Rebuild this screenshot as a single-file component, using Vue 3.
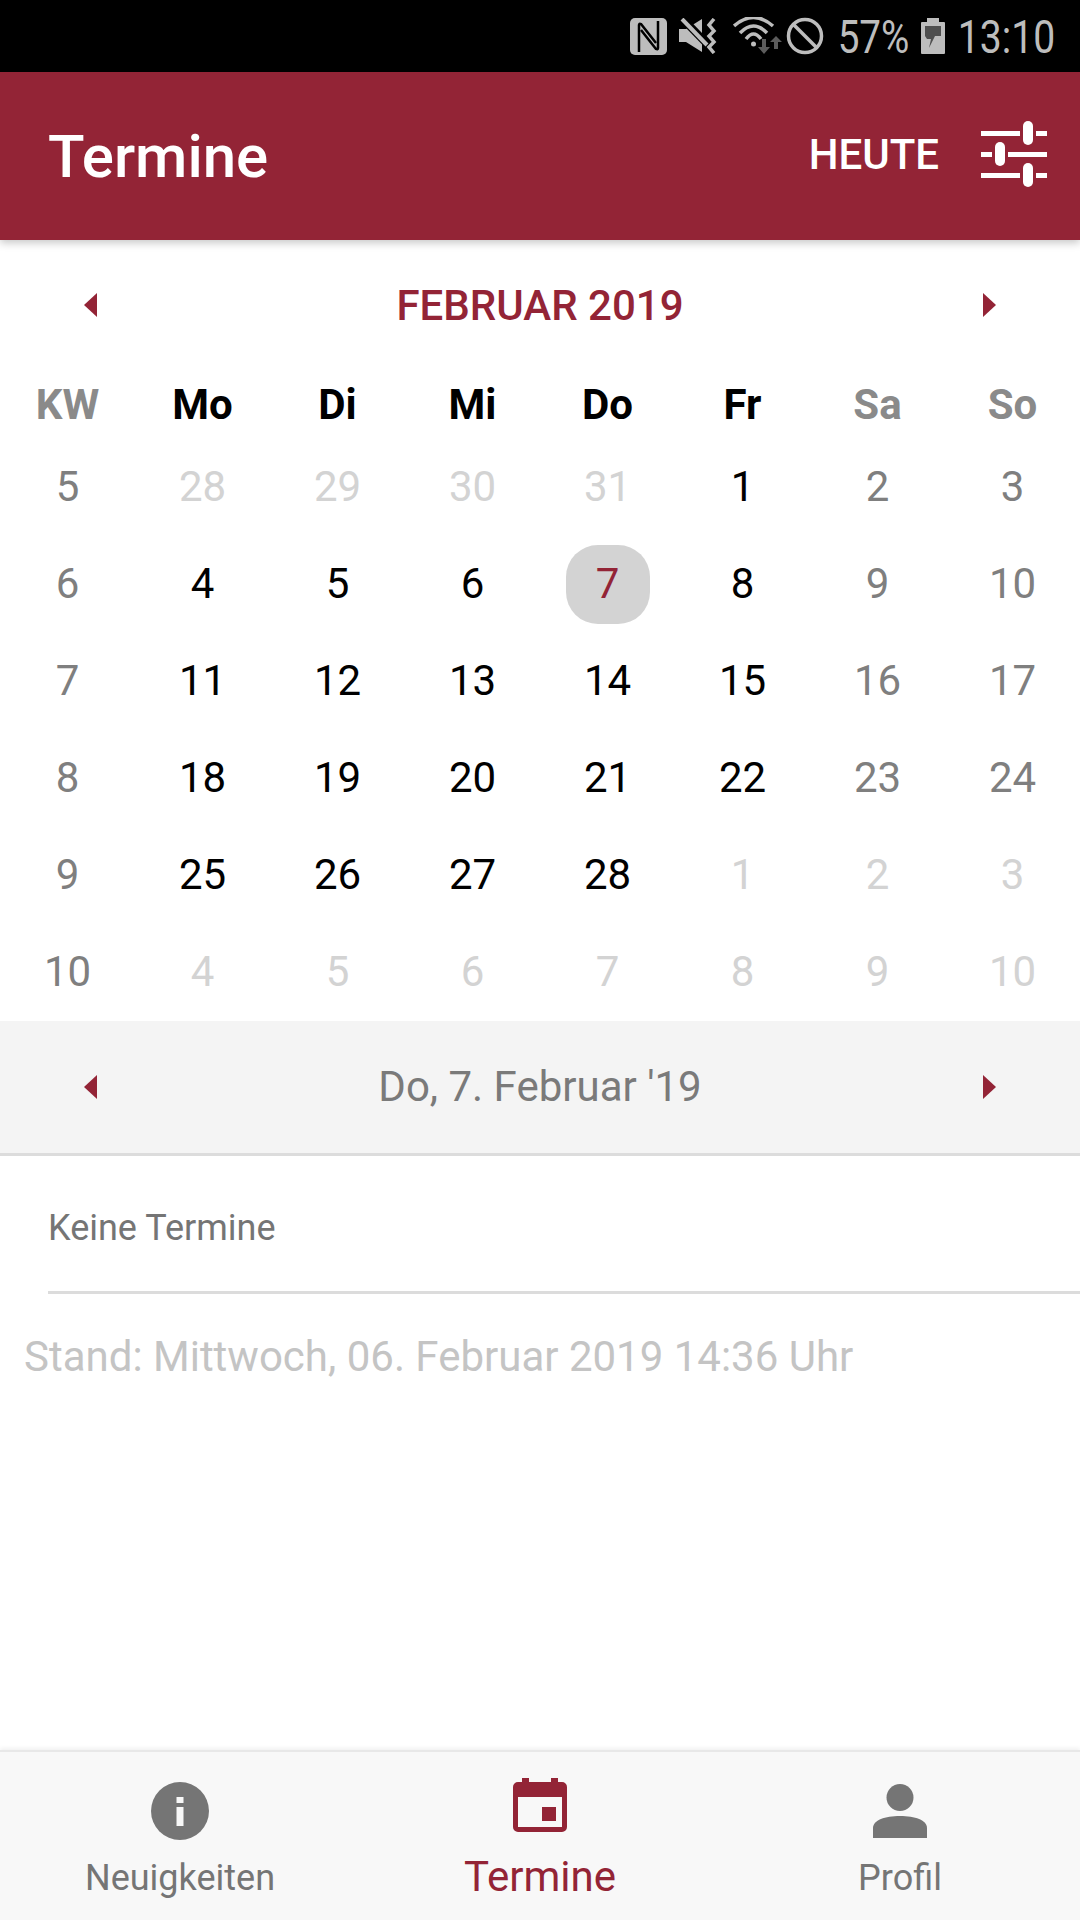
<script setup>
const weekdays = [
  { label: "KW", tone: "grey" },
  { label: "Mo" },
  { label: "Di" },
  { label: "Mi" },
  { label: "Do" },
  { label: "Fr" },
  { label: "Sa", tone: "grey" },
  { label: "So", tone: "grey" },
];

// each row: week number, then Monday to Sunday; "o" marks days outside the month
const weeks = [
  [5, "o28", "o29", "o30", "o31", 1, "w2", "w3"],
  [6, 4, 5, 6, "t7", 8, "w9", "w10"],
  [7, 11, 12, 13, 14, 15, "w16", "w17"],
  [8, 18, 19, 20, 21, 22, "w23", "w24"],
  [9, 25, 26, 27, 28, "o1", "o2", "o3"],
  [10, "o4", "o5", "o6", "o7", "o8", "o9", "o10"],
];

function cell(value, index) {
  if (index === 0) return { text: value, cls: "grey" };
  if (typeof value === "number") return { text: value, cls: "" };
  const kind = { o: "faded", w: "grey", t: "today" }[value[0]];
  return { text: value.slice(1), cls: kind };
}
</script>

<template>
  <div class="screen">
    <div class="statusbar">
      <svg class="st-nfc" viewBox="0 0 37 37" width="37" height="37">
        <rect width="37" height="37" rx="5" fill="#bdbdbd" />
        <g fill="none" stroke="#000" stroke-width="2.500">
          <path d="M9 34V7q0-2 2-1l15 19" />
          <path d="M28 3v27q0 2-2 1L11 12" />
        </g>
      </svg>
      <svg class="st-mute" viewBox="0 0 38 36" width="38" height="36">
        <path fill="#bdbdbd" d="M0 11h7L23 1v33L7 24H0z" />
        <path fill="none" stroke="#000" stroke-width="8" d="M1 -2l30 31" />
        <path fill="none" stroke="#bdbdbd" stroke-width="4" d="M3 1l25 26" />
        <path fill="none" stroke="#bdbdbd" stroke-width="3.500" d="M35 1l-5 6 5 6-5 5 5 6-5 5 5 6" />
      </svg>
      <svg class="st-wifi" viewBox="0 0 53 38" width="53" height="38">
        <g fill="none" stroke="#bdbdbd" stroke-width="3.500">
          <path d="M1 9Q20.500 -8 40 9" />
          <path d="M7 16Q20.500 2 34 16" />
          <path d="M13 22Q20.500 12 28 22" />
        </g>
        <circle cx="20.500" cy="27" r="2.500" fill="#bdbdbd" />
        <path fill="#5c5c5c" d="M29 22h4v8h4l-6 7-6-7h4z" />
        <path fill="#5c5c5c" d="M41 32v-7h-4l6-6 6 6h-4v7z" />
      </svg>
      <svg class="st-dnd" viewBox="0 0 38 38" width="38" height="38">
        <circle cx="19" cy="19" r="16.500" fill="none" stroke="#bdbdbd" stroke-width="3.500" />
        <path stroke="#bdbdbd" stroke-width="3.500" d="M7 7l24 24" />
      </svg>
      <span class="st-text st-pct">57%</span>
      <svg class="st-batt" viewBox="0 0 24 36" width="24" height="36">
        <path fill="#bdbdbd" d="M6 0h12v4h5a1 1 0 0 1 1 1v30a1 1 0 0 1-1 1H1a1 1 0 0 1-1-1V5a1 1 0 0 1 1-1h5z" />
        <path fill="#4f4f4f" d="M4 8h16v10h-6L8 30l2-9H6L4 18z" />
      </svg>
      <span class="st-text st-time">13:10</span>
    </div>

    <header class="appbar">
      <h1 class="title">Termine</h1>
      <span class="today-btn">HEUTE</span>
      <svg class="filter" viewBox="0 0 66 66" width="66" height="66">
        <g fill="#fff">
          <rect x="0" y="10" width="66" height="5" />
          <rect x="0" y="31" width="66" height="5" />
          <rect x="0" y="52" width="66" height="5" />
        </g>
        <g fill="#fff" stroke="#932436" stroke-width="6" paint-order="stroke">
          <rect x="42" y="0" width="10" height="24" rx="5" />
          <rect x="14" y="21" width="10" height="24" rx="5" />
          <rect x="42" y="42" width="10" height="24" rx="5" />
        </g>
      </svg>
    </header>

    <main class="content">
      <div class="month-nav">
        <span class="arrow left"></span>
        <span class="month">FEBRUAR 2019</span>
        <span class="arrow right"></span>
      </div>

      <div class="grid head">
        <div v-for="d in weekdays" :key="d.label" class="weekday" :class="d.tone">{{ d.label }}</div>
      </div>

      <div v-for="(week, w) in weeks" :key="w" class="grid row">
        <div v-for="(value, i) in week" :key="i" class="day" :class="cell(value, i).cls">
          <span class="num">{{ cell(value, i).text }}</span>
        </div>
      </div>

      <div class="day-nav">
        <span class="arrow left"></span>
        <span class="day-label">Do, 7. Februar '19</span>
        <span class="arrow right"></span>
      </div>

      <div class="empty">Keine Termine</div>
      <div class="stand">Stand: Mittwoch, 06. Februar 2019 14:36 Uhr</div>
    </main>

    <nav class="tabs">
      <div class="tab">
        <div class="tab-icon">
          <svg class="ic-info" viewBox="0 0 58 58" width="58" height="58">
            <circle cx="29" cy="29" r="29" fill="#757575" />
            <rect x="25.500" y="15" width="7" height="6" fill="#f8f8f8" />
            <rect x="25.500" y="25" width="7" height="19" fill="#f8f8f8" />
          </svg>
        </div>
        <span class="tab-label">Neuigkeiten</span>
      </div>
      <div class="tab active">
        <div class="tab-icon">
          <svg viewBox="0 0 54 54" width="54" height="54">
            <path fill="#932436" fill-rule="evenodd" d="M9 0h7v4h22V0h7v4h4a5 5 0 0 1 5 5v40a5 5 0 0 1-5 5H5a5 5 0 0 1-5-5V9a5 5 0 0 1 5-5h4zM5 19v30h44V19z" />
            <rect x="29" y="29" width="14" height="14" fill="#932436" />
          </svg>
        </div>
        <span class="tab-label">Termine</span>
      </div>
      <div class="tab">
        <div class="tab-icon">
          <svg class="ic-person" viewBox="0 0 54 54" width="54" height="54">
            <circle cx="27" cy="13.500" r="13.500" fill="#757575" />
            <path fill="#757575" d="M0 54V44c0-8 12-12 27-12s27 4 27 12v10z" />
          </svg>
        </div>
        <span class="tab-label">Profil</span>
      </div>
    </nav>
  </div>
</template>

<style>
html,
body {
  margin: 0;
  background: #fff;
}
</style>

<style scoped>
.screen {
  width: 1080px;
  height: 1920px;
  display: flex;
  flex-direction: column;
  background: #fff;
  font-family: Roboto, "Liberation Sans", sans-serif;
  overflow: hidden;
}

.statusbar {
  height: 72px;
  flex: none;
  background: #000;
  display: flex;
  align-items: center;
  justify-content: flex-end;
  padding-right: 26px;
  box-sizing: border-box;
}
.st-nfc {
  margin-right: 12px;
}
.st-mute {
  margin-right: 16px;
}
.st-dnd {
  margin-right: 15px;
}
.st-text {
  color: #bdbdbd;
  font-size: 46px;
  line-height: 50px;
  margin-top: 2px;
  display: flex;
  justify-content: center;
  white-space: nowrap;
}
.st-pct {
  width: 69px;
  margin-right: 13px;
  transform: scaleX(0.84);
}
.st-batt {
  margin-right: 14px;
}
.st-time {
  width: 95px;
  transform: scaleX(0.85);
}

.appbar {
  height: 168px;
  flex: none;
  background: #932436;
  display: flex;
  align-items: center;
  padding: 0 33px 0 48px;
  box-shadow: 0 3px 8px rgba(0, 0, 0, 0.22);
  position: relative;
  color: #fff;
}
.title {
  margin: 0;
  flex: 1;
  font-size: 60px;
  font-weight: 500;
}
.today-btn {
  font-size: 42px;
  font-weight: 500;
  margin: 0 42px 4px 0;
}
.filter {
  margin-bottom: 4px;
}

.month-nav {
  height: 130px;
  display: flex;
  align-items: center;
  justify-content: space-between;
  padding: 0 84px;
  box-sizing: border-box;
}
.month {
  color: #932436;
  font-size: 42px;
  font-weight: 500;
}
.arrow {
  width: 0;
  height: 0;
  border-top: 12px solid transparent;
  border-bottom: 12px solid transparent;
}
.arrow.left {
  border-right: 13px solid #932436;
}
.arrow.right {
  border-left: 13px solid #932436;
}

.grid {
  display: grid;
  grid-template-columns: repeat(8, 135px);
}
.head {
  height: 68px;
  align-items: center;
}
.weekday {
  text-align: center;
  color: #000;
  font-size: 42px;
  font-weight: 700;
}
.weekday.grey {
  color: #8a8a8a;
}

.row {
  height: 97px;
}
.day {
  display: flex;
  align-items: center;
  justify-content: center;
  color: #000;
  font-size: 42px;
}
.day.grey {
  color: #7f7f7f;
}
.day.faded {
  color: #d3d3d3;
}
.day.today .num {
  background: #d3d3d3;
  color: #932436;
  width: 84px;
  height: 77px;
  margin-top: 2px;
  padding-bottom: 2px;
  border-radius: 32px;
  display: flex;
  align-items: center;
  justify-content: center;
}

.day-nav {
  height: 135px;
  margin-top: 1px;
  display: flex;
  align-items: center;
  justify-content: space-between;
  padding: 0 84px;
  box-sizing: border-box;
  background: #f4f4f4;
  border-bottom: 3px solid #dcdcdc;
}
.day-label {
  color: #7a7a7a;
  font-size: 42px;
  margin-bottom: 2px;
}

.empty {
  margin-left: 48px;
  height: 138px;
  padding-top: 8px;
  display: flex;
  align-items: center;
  box-sizing: border-box;
  border-bottom: 3px solid #dcdcdc;
  color: #757575;
  font-size: 36px;
}
.stand {
  margin: 38px 0 0 24px;
  color: #c4c4c4;
  font-size: 42px;
  line-height: 50px;
}

.content {
  flex: 1;
  min-height: 0;
}

.tabs {
  height: 170px;
  flex: none;
  background: #f8f8f8;
  display: grid;
  grid-template-columns: repeat(3, 360px);
  border-top: 2px solid #e8e8e8;
  box-sizing: border-box;
  box-shadow: 0 -2px 4px rgba(0, 0, 0, 0.06);
}
.tab {
  display: flex;
  flex-direction: column;
  align-items: center;
  padding-top: 26px;
  box-sizing: border-box;
}
.tab-icon {
  height: 66px;
  display: flex;
  align-items: flex-start;
}
.ic-info {
  margin-top: 4px;
}
.ic-person {
  margin-top: 6px;
}
.tab-label {
  margin-top: 14px;
  color: #757575;
  font-size: 36px;
  line-height: 41px;
}
.tab.active .tab-label {
  margin-top: 12px;
  color: #932436;
  font-size: 42px;
}
</style>
